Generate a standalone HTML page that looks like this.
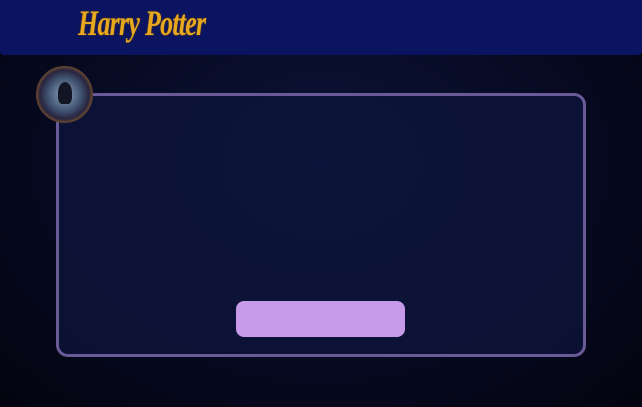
<!DOCTYPE html>
<html><head><style>
body{margin:0;width:642px;height:407px;overflow:hidden;background:radial-gradient(ellipse at 50% 40%,#0c1338 0%,#070a22 55%,#03040f 100%);font-family:"Liberation Serif",serif;position:relative}
.hdr{position:absolute;left:0;top:0;width:642px;height:55px;background:#0b1460;border-radius:0 0 4px 4px}
.logo{position:absolute;left:78px;top:2px;font-size:36px;font-weight:bold;color:#e6a81e;font-style:italic;letter-spacing:-1px;transform:scaleX(0.72);transform-origin:left;text-shadow:0 0 2px #7a4a00}
.card{position:absolute;left:56px;top:93px;width:524px;height:258px;border:3px solid #6a5a98;border-radius:12px;background:rgba(14,22,60,0.75)}
.btn{position:absolute;left:236px;top:301px;width:169px;height:36px;background:#c69ae8;border-radius:8px}
.crest{position:absolute;left:36px;top:66px;width:57px;height:57px;border-radius:50%;background:radial-gradient(circle,#8fa4b8 0%,#3e5270 45%,#2a2540 65%,#6a5038 80%,#3a2a20 100%);border:2px solid #5b4030;box-sizing:border-box}
.crest:after{content:"";position:absolute;left:20px;top:14px;width:14px;height:22px;background:#121624;border-radius:50% 50% 30% 30%}
</style></head><body>
<div class="hdr"><div class="logo">Harry Potter</div></div>
<div class="card"></div>
<div class="btn"></div>
<div class="crest"></div>
</body></html>
